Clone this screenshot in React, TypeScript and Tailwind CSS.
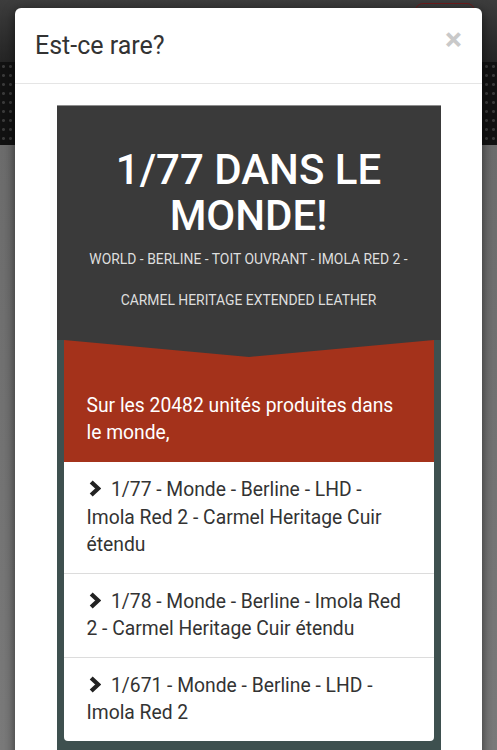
import React from "react";

const items = [
    "1/77 - Monde - Berline - LHD - Imola Red 2 - Carmel Heritage Cuir étendu",
    "1/78 - Monde - Berline - Imola Red 2 - Carmel Heritage Cuir étendu",
    "1/671 - Monde - Berline - LHD - Imola Red 2",
];

function Chevron() {
    return (
        <svg width="14" height="17" viewBox="0 0 14 17" className="inline-block mr-[10.5px] -mt-[4px] align-middle">
            <polyline points="4.2,2 11.2,8.5 4.2,15" fill="none" stroke="#222" strokeWidth="4.3" strokeLinejoin="miter" />
        </svg>
    );
}

export default function App() {
    return (
        <div className="relative h-screen overflow-hidden font-['Roboto',sans-serif]">
            {/* page behind the modal */}
            <div className="flex flex-col h-full">
                <div className="h-[62px] bg-gradient-to-b from-[#3d3d3d] to-[#252525] flex justify-end">
                    <div className="mt-[3px] mr-[22px] w-[60px] h-[40px] rounded-lg border border-[#6e1c1c]" />
                </div>
                <div className="h-[83px] bg-[#121212] bg-[radial-gradient(circle,#3a3a3a_1px,transparent_2px)] bg-[length:7px_9px]" />
                <div className="flex-1 bg-gradient-to-b from-[#6c6c6c] to-[#7a7a7a]" />
            </div>

            {/* modal */}
            <div className="absolute top-[8px] left-[15px] w-[467px] bg-white rounded-[6px] shadow-[0_3px_12px_rgba(0,0,0,0.6)]">
                <div className="h-[76px] px-[20px] flex items-center justify-between border-b border-[#e5e5e5]">
                    <h4 className="text-[25px] text-[#333] leading-none">Est-ce rare?</h4>
                    <span className="text-[32px] font-bold text-[#c9c9c9] leading-none -mt-[14px]">×</span>
                </div>

                <div className="pt-[21px] pb-[30px]">
                    <div className="mx-auto w-[384px] border-t border-[#8d8d8d]">
                        <div className="bg-[#3a3a3a] pt-[41px] pb-[19px] text-center px-[10px]">
                            <h1 className="text-white text-[42px] leading-[46px] font-medium">1/77 DANS LE MONDE!</h1>
                            <p className="text-[#dedede] text-[13.9px] leading-[41px]">
                                WORLD - BERLINE - TOIT OUVRANT - IMOLA RED 2 - CARMEL HERITAGE EXTENDED LEATHER
                            </p>
                        </div>

                        <div className="bg-[#3e504f] px-[7px] pb-[20px]">
                            <div className="bg-[#a4321b]">
                                <svg viewBox="0 0 370 17" preserveAspectRatio="none" className="block w-full h-[17px]">
                                    <polygon points="0,0 370,0 185,17" fill="#3a3a3a" />
                                </svg>
                                <p className="text-white text-[19.3px] leading-[27px] pt-[35px] pb-[16px] pl-[23px] pr-[30px]">
                                    Sur les 20482 unités produites dans le monde,
                                </p>
                            </div>

                            <ul className="bg-white rounded-b-[4px]">
                                {items.map((item) => (
                                    <li
                                        key={item}
                                        className="px-[23px] py-[14px] border-b border-[#dcdcdc] last:border-b-0 text-[19.3px] leading-[27.5px] text-[#333]"
                                    >
                                        <Chevron />
                                        {item}
                                    </li>
                                ))}
                            </ul>
                        </div>
                    </div>
                </div>
            </div>
        </div>
    );
}
